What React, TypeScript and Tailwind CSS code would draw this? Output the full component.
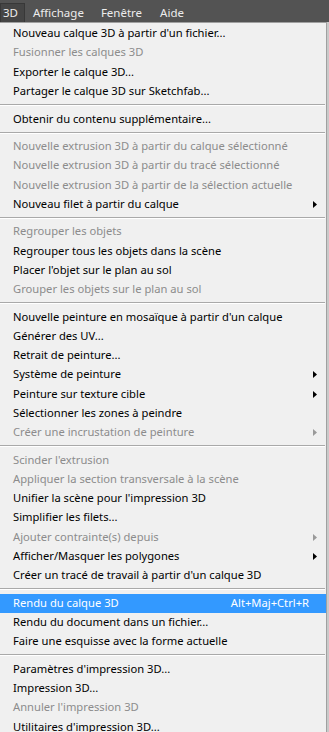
import React from 'react';

type Entry =
  | { label: string; disabled?: boolean; sub?: boolean; shortcut?: string; active?: boolean }
  | 'sep';

const entries: Entry[] = [
  { label: "Nouveau calque 3D à partir d'un fichier..." },
  { label: 'Fusionner les calques 3D', disabled: true },
  { label: 'Exporter le calque 3D...' },
  { label: 'Partager le calque 3D sur Sketchfab...' },
  'sep',
  { label: 'Obtenir du contenu supplémentaire...' },
  'sep',
  { label: 'Nouvelle extrusion 3D à partir du calque sélectionné', disabled: true },
  { label: 'Nouvelle extrusion 3D à partir du tracé sélectionné', disabled: true },
  { label: 'Nouvelle extrusion 3D à partir de la sélection actuelle', disabled: true },
  { label: 'Nouveau filet à partir du calque', sub: true },
  'sep',
  { label: 'Regrouper les objets', disabled: true },
  { label: 'Regrouper tous les objets dans la scène' },
  { label: "Placer l'objet sur le plan au sol" },
  { label: 'Grouper les objets sur le plan au sol', disabled: true },
  'sep',
  { label: "Nouvelle peinture en mosaïque à partir d'un calque" },
  { label: 'Générer des UV...' },
  { label: 'Retrait de peinture...' },
  { label: 'Système de peinture', sub: true },
  { label: 'Peinture sur texture cible', sub: true },
  { label: 'Sélectionner les zones à peindre' },
  { label: 'Créer une incrustation de peinture', disabled: true, sub: true },
  'sep',
  { label: "Scinder l'extrusion", disabled: true },
  { label: 'Appliquer la section transversale à la scène', disabled: true },
  { label: "Unifier la scène pour l'impression 3D" },
  { label: 'Simplifier les filets...' },
  { label: 'Ajouter contrainte(s) depuis', disabled: true, sub: true },
  { label: 'Afficher/Masquer les polygones', sub: true },
  { label: "Créer un tracé de travail à partir d'un calque 3D" },
  'sep',
  { label: 'Rendu du calque 3D', shortcut: 'Alt+Maj+Ctrl+R', active: true },
  { label: 'Rendu du document dans un fichier...' },
  { label: 'Faire une esquisse avec la forme actuelle' },
  'sep',
  { label: "Paramètres d'impression 3D..." },
  { label: 'Impression 3D...' },
  { label: "Annuler l'impression 3D", disabled: true },
  { label: "Utilitaires d'impression 3D..." },
];

function Arrow({ color }: { color: string }) {
  return (
    <svg width="4" height="7" viewBox="0 0 4 7" className="shrink-0">
      <path d="M0 0 L4 3.5 L0 7 Z" fill={color} />
    </svg>
  );
}

export default function App() {
  return (
    <div
      className="w-[329px] h-[732px] overflow-hidden bg-[#c9c9c9] text-[11.2px]"
      style={{ fontFamily: '"Noto Sans", "Liberation Sans", sans-serif' }}
    >
      {/* menu bar */}
      <div className="h-[22px] bg-[#535353] flex items-end text-[#ececec] text-[11.5px]">
        <div className="h-[19px] w-[25px] bg-[#454545] border border-[#383838] border-b-0 flex items-center pl-[2px]">
          3D
        </div>
        <div className="h-[19px] flex items-center ml-[8px]">Affichage</div>
        <div className="h-[19px] flex items-center ml-[17px]">Fenêtre</div>
        <div className="h-[19px] flex items-center ml-[18px]">Aide</div>
      </div>

      {/* dropdown */}
      <div className="w-[327px] bg-[#f0f0f0] border-t border-r border-[#a0a0a0] pt-[1px] pb-2">
        {entries.map((e, i) => {
          if (e === 'sep') {
            return (
              <div key={i} className="h-[8.3px] flex flex-col pt-[3px] pr-[1px]">
                <div className="h-px bg-[#a9a9a9]" />
                <div className="h-px bg-white" />
              </div>
            );
          }
          const color = e.active ? 'text-white' : e.disabled ? 'text-[#8c8c8c]' : 'text-black';
          return (
            <div
              key={i}
              className={`h-[19.25px] flex items-center pl-[13px] pr-[9px] whitespace-nowrap ${color} ${
                e.active ? 'bg-[#3399ff]' : ''
              }`}
            >
              <span className="flex-1">{e.label}</span>
              {e.shortcut && <span className="mr-[8px]">{e.shortcut}</span>}
              {e.sub && <Arrow color={e.disabled ? '#9a9a9a' : '#000000'} />}
            </div>
          );
        })}
      </div>
    </div>
  );
}
